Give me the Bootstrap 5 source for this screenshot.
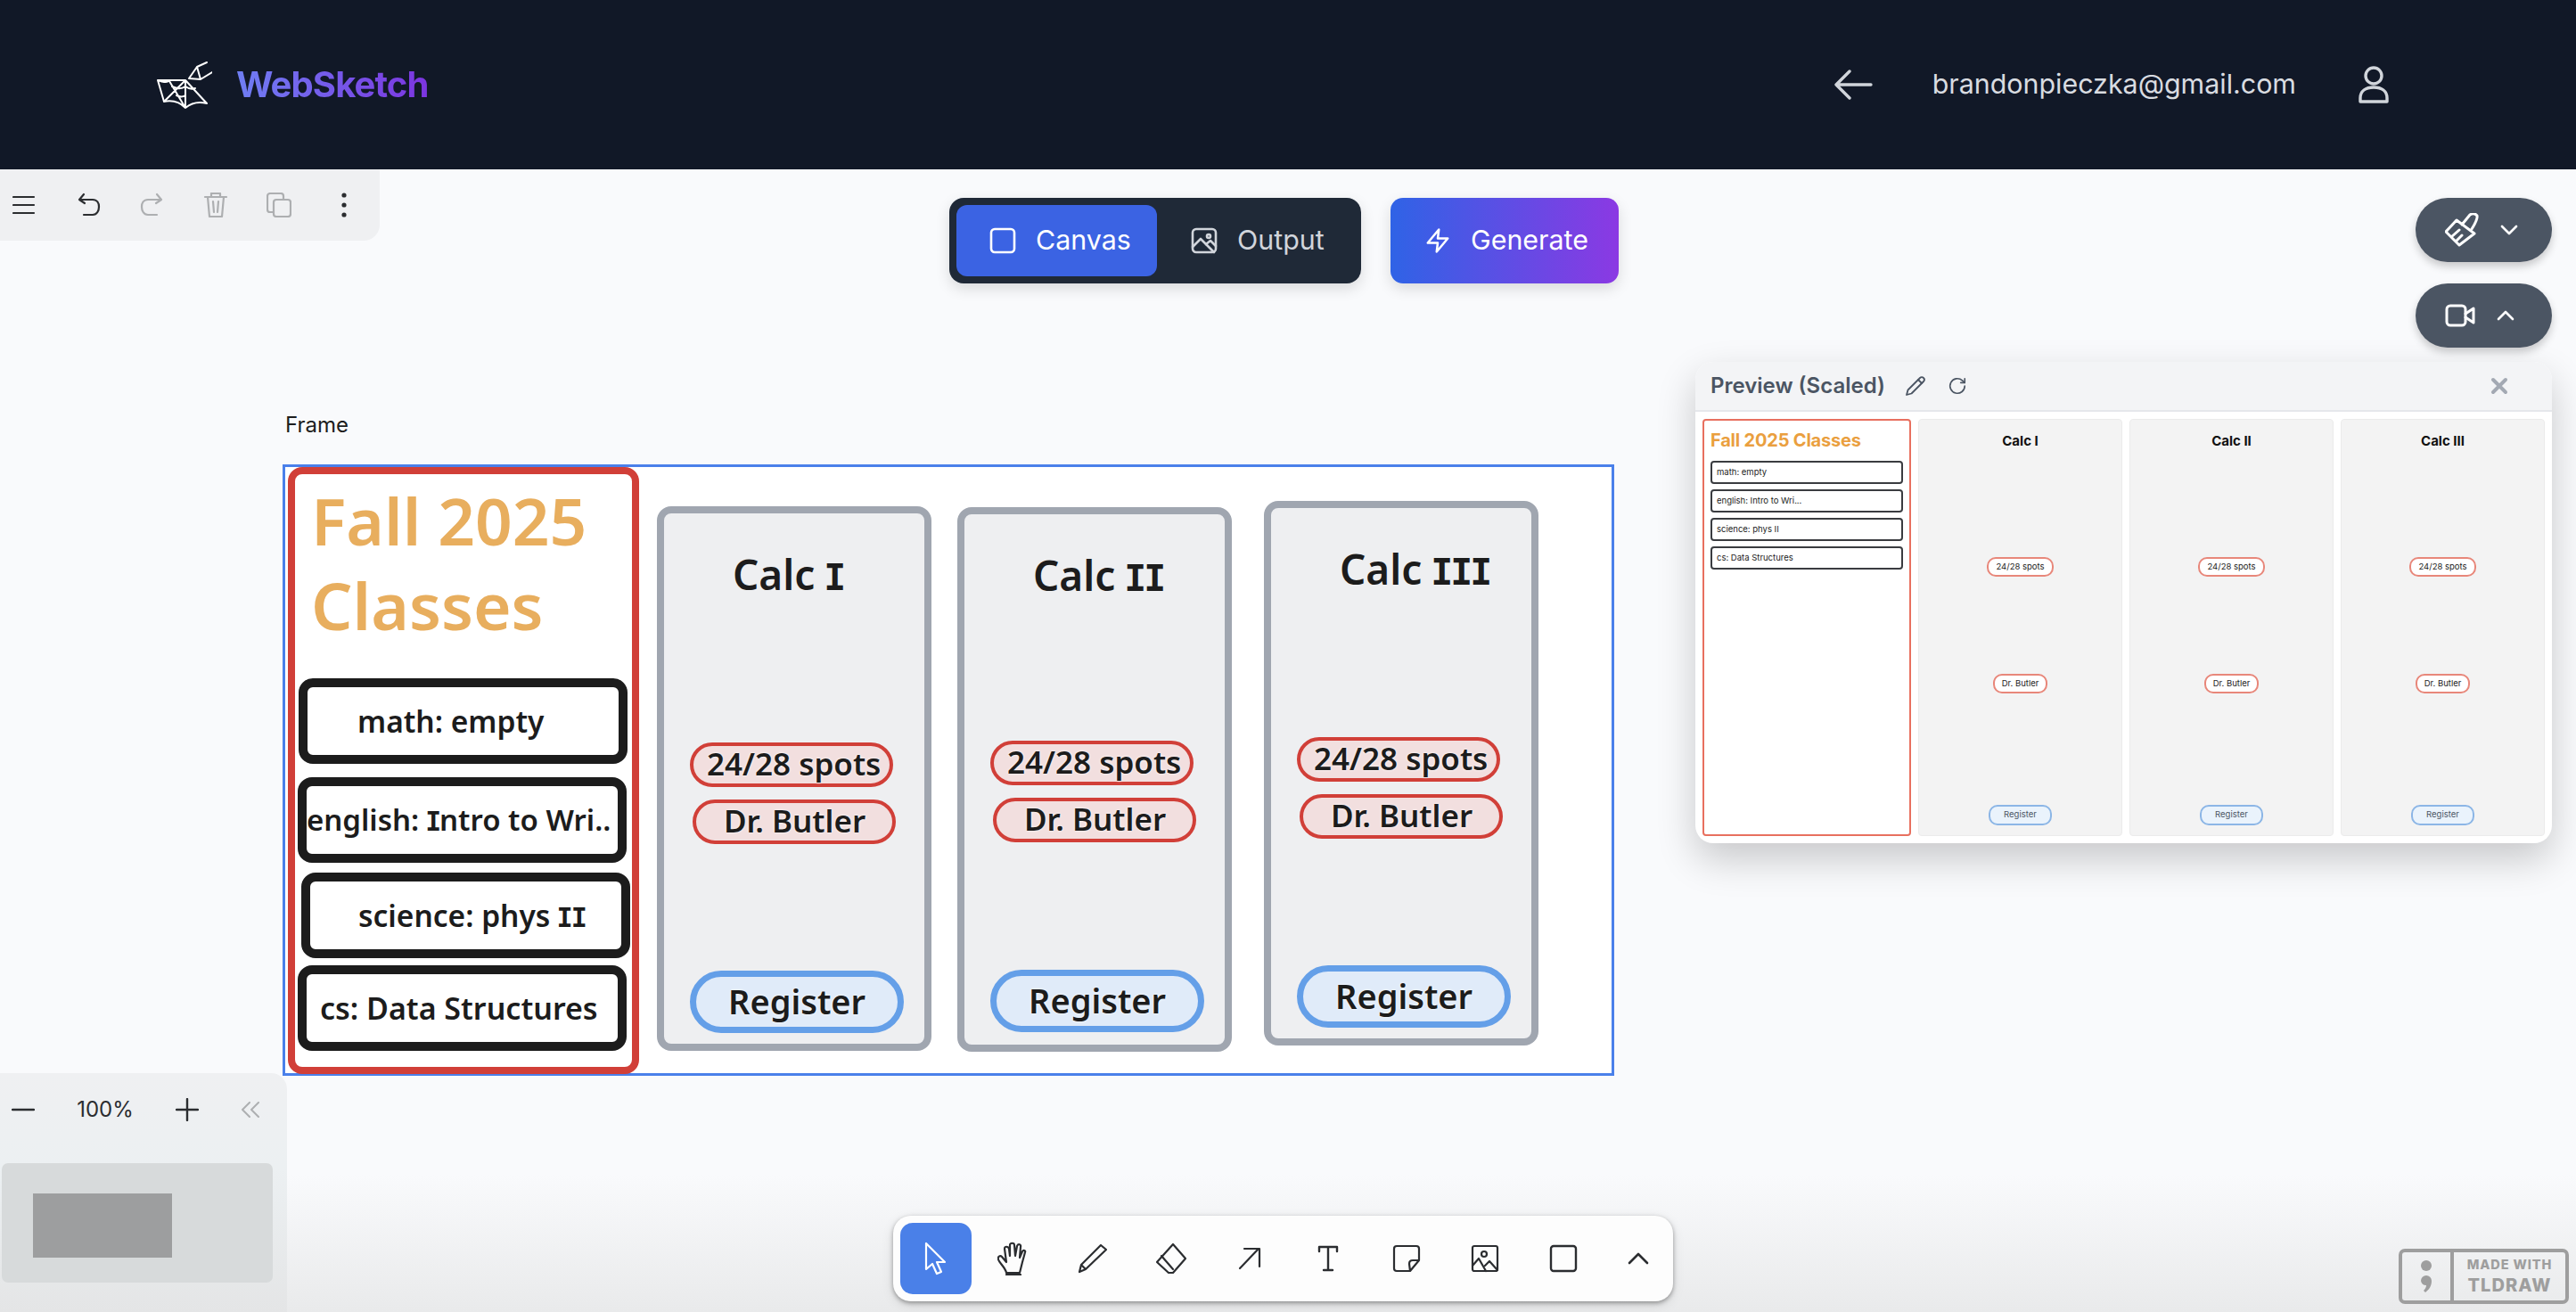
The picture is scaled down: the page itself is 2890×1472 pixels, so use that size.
<!DOCTYPE html>
<html lang="en">
<head>
<meta charset="UTF-8">
<meta name="viewport" content="width=device-width, initial-scale=1.0">
<title>WebSketch</title>
<link href="https://cdn.jsdelivr.net/npm/bootstrap@5.3.3/dist/css/bootstrap.min.css" rel="stylesheet">
<style>
  html, body { height: 100%; }
  body { font-family: Inter, "Liberation Sans", sans-serif; background: #f9fafc; overflow: hidden; }
  svg { display: block; flex: none; fill: none; stroke: currentColor; stroke-linecap: round; stroke-linejoin: round; }
  svg.solid { stroke: none; fill: currentColor; }

  .app-header { height: 190px; background: #111827; padding: 0 210px 0 176px; }
  .logo-mark { color: #fff; }
  .brand-text { font-size: 40px; font-weight: 700; letter-spacing: -.9px; margin-left: 27px; background: linear-gradient(to right, #6f7ef3, #7c35e0); -webkit-background-clip: text; background-clip: text; color: transparent; }
  .header-link { color: #d1d5db; }
  .user-mail { font-size: 30.400px; margin: 0 70px 0 67px; color: #d9dce1; }

  .work-area { position: relative; height: 1282px; background: linear-gradient(to bottom, #f9fafc 88%, #e9eaeb 100%); }

  /* tldraw panels */
  .top-panel { position: absolute; left: 0; top: 0; width: 426px; height: 80px; background: #eff0f2; border-bottom-right-radius: 18px; color: #2b2d30; }
  .top-panel svg { position: absolute; top: 26px; }
  .muted-icon { color: #adafb1; }
  .ic-menu { left: 14px; } .ic-undo { left: 87px; } .ic-redo { left: 157px; } .ic-trash { left: 228px; } .ic-dup { left: 299px; } .ic-dots { left: 376px; }

  .zoom-panel { position: absolute; left: 0; top: 1014px; width: 322px; height: 268px; background: linear-gradient(to bottom, #eff0f2, #ecf0f2 40%, #e4e5e6); border-top-right-radius: 18px; color: #2b2d30; }
  .zoom-row { height: 84px; padding: 0 30px 2px 13px; font-size: 24px; justify-content: space-between; }
  .mini-map { width: 304px; height: 134px; margin: 17px 0 0 2px; background: #d7dadb; border-radius: 7px; padding: 34px 0 0 35px; }
  .mini-view { width: 156px; height: 72px; background: #9d9e9f; }

  .tool-bar { position: absolute; left: 1002px; top: 1174px; width: 875px; height: 96px; padding: 8px 0 8px 8px; gap: 8px; background: #fdfdfd; border-radius: 20px; box-shadow: 0 2px 5px rgba(0,0,0,.35), 0 4px 14px rgba(0,0,0,.1); color: #2b2d30; }
  .tool-btn { flex: none; width: 80px; height: 80px; border-radius: 14px; }
  .tool-btn.active { background: #4a80e8; color: #fff; }
  .tool-btn.last-tool { width: 72px; }

  .made-with { position: absolute; left: 2691px; top: 1211px; width: 191px; height: 62px; border: 4px solid #9e9e9e; border-radius: 7px; color: #9e9e9e; font-weight: 800; line-height: 1; }
  .made-semi { width: 58px; height: 100%; border-right: 4px solid #9e9e9e; }
  .made-text { flex: 1; text-align: center; }
  .made-a { font-size: 14.5px; letter-spacing: .9px; }
  .made-b { font-size: 20px; letter-spacing: 1.1px; margin-top: 5px; }

  /* mode switch */
  .mode-switch { position: absolute; left: 1065px; top: 32px; width: 462px; height: 96px; padding: 8px; background: #1f2937; border-radius: 16px; box-shadow: 0 6px 16px rgba(0,0,0,.13); font-size: 30.400px; }
  .mode-btn { flex: none; height: 80px; width: 225px; gap: 22px; padding-left: 37px; border-radius: 12px; color: #d1d5db; }
  .mode-btn.active { background: #3b63e3; color: #fff; }
  .mode-btn + .mode-btn { padding-left: 38px; }
  .gen-btn { position: absolute; left: 1560px; top: 32px; width: 256px; height: 96px; gap: 22px; padding-left: 38px; border-radius: 14px; background: linear-gradient(to right, #2f63e6, #8b39e3); color: #fff; font-size: 30.400px; box-shadow: 0 6px 16px rgba(0,0,0,.13); }

  .fab-btn { position: absolute; left: 2710px; width: 153px; height: 72px; border-radius: 36px; background: #4b5563; color: #fff; gap: 24px; padding-left: 33px; box-shadow: 0 5px 10px rgba(0,0,0,.2); }
  .fab-a { top: 32px; } .fab-b { top: 128px; }

  /* preview panel */
  .preview-panel { position: absolute; left: 1902px; top: 216px; width: 961px; height: 540px; background: #fff; border-radius: 20px; box-shadow: 0 18px 44px rgba(0,0,0,.2); overflow: hidden; }
  .preview-head { height: 56px; padding: 0 49px 0 17px; background: #f3f4f6; border-bottom: 2px solid #e5e7eb; color: #4b5563; }
  .preview-title { font-size: 24px; font-weight: 600; margin-right: 22px; }
  .close-mark { color: #a3a9b3; }
  .preview-body { padding: 8px; gap: 8px; height: 476px; }
  .pv-side { width: 234px; height: 468px; border: 2px solid #e8705f; border-radius: 4px; background: #fff; padding: 10px 7px; }
  .pv-side-title { font-size: 20px; line-height: 24px; font-weight: 700; color: #ea9f3f; margin-bottom: 11px; letter-spacing: -.2px; }
  .pv-item { height: 26px; border: 2px solid #3a3c40; border-radius: 4px; padding-left: 5px; margin-bottom: 6px; font-size: 9.5px; line-height: 22px; color: #222; }
  .pv-col { width: 229px; height: 468px; background: #f3f3f3; border: 1px solid #ebebeb; border-radius: 4px; }
  .pv-col-title { font-size: 15px; font-weight: 700; line-height: 20px; margin-top: 14px; color: #111; }
  .pv-pill { height: 22px; padding: 0 8px; border: 2px solid #e8877a; border-radius: 10px; background: #fff; font-size: 9.5px; line-height: 18px; color: #222; }
  .pv-spots { margin-top: 120px; }
  .pv-doc { margin-top: 109px; }
  .pv-reg { height: 23px; margin-top: 125px; padding: 0 15px; background: #eaf3fc; border-color: #8cb6e6; color: #4b5563; }

  /* drawn frame on the canvas */
  .frame-label { position: absolute; left: 320px; top: 273px; font-size: 24px; line-height: 28px; color: #1d1d1d; }
  .frame-box { position: absolute; left: 317px; top: 331px; width: 1494px; height: 686px; background: #fff; border: 3px solid #4a80ea; font-family: "Noto Sans", sans-serif; color: #1c1c1c; font-weight: 600; }
  .slab { font-family: "DejaVu Sans Mono", monospace; font-size: .9em; font-weight: 700; letter-spacing: -.07em; margin-left: -.05em; }
  .sk-side { position: absolute; left: 3px; top: 0; width: 394px; height: 681px; border: 8px solid #d13f38; border-radius: 16px; background: #fff; padding: 4px; }
  .sk-head { height: 190px; margin: 0 0 35px 14px; font-size: 73px; line-height: 95px; color: #e8ae5e; font-weight: 600; }
  .sk-box { height: 96px; width: 369px; border: 10px solid #1c1c1c; border-radius: 16px; font-size: 33.5px; white-space: nowrap; overflow: hidden; }
  .sk-b1 { padding-left: 56px; }
  .sk-b2 { padding-left: 0; margin: 15px 0 0 -1px; font-size: 33px; }
  .sk-b3 { padding-left: 54px; margin: 11px 0 0 3px; }
  .sk-b4 { padding-left: 15px; margin: 8px 0 0 -1px; font-size: 34px; }
  .sk-card { position: absolute; width: 308px; height: 611px; border: 8px solid #a0a6b0; border-radius: 16px; background: #eeeff1; padding-left: 29px; }
  .sk-c1 { left: 417px; top: 44px; } .sk-c2 { left: 754px; top: 45px; } .sk-c3 { left: 1098px; top: 38px; }
  .sk-title { height: 60px; margin: 38px 0 0 48px; font-size: 46px; line-height: 60px; }
  .sk-pill { width: 228px; height: 50px; padding-bottom: 2px; border: 4px solid #d13f38; border-radius: 25px; background: #f2dfdf; font-size: 35px; white-space: nowrap; text-shadow: 0 0 3px #fff; }
  .sk-spots { margin-top: 159px; padding-left: 15px; }
  .sk-doc { margin: 14px 0 0 3px; padding-left: 31px; }
  .sk-reg { width: 240px; height: 70px; margin-top: 142px; padding: 0 0 2px 36px; border: 7px solid #649fe8; border-radius: 35px; background: #e0ebf9; font-size: 38px; white-space: nowrap; text-shadow: 0 0 3px #fff; }
  .sk-c2 .sk-spots { margin-top: 156px; }
  .sk-c2 .sk-reg { margin-top: 143px; }
</style>
</head>
<body>

<nav class="app-header d-flex align-items-center justify-content-between">
  <div class="d-flex align-items-center">
    <svg class="logo-mark" width="62" height="53" viewBox="0 0 62 53" stroke-width="2">
      <path d="M56 1 45 6 36 19l13 1 13-8M45 6l4 14"/>
      <path d="M1 21h31l24 26c-11-3-18 0-24 5-6-6-14-9-24-7zM1 21c6 2 9 3 12 1M32 21l0 31M32 21 8 45M14 22l18 30M17 28c6 3 11 3 15 0M22 38c4 2 7 2 10 0M32 28c4 3 8 3 11 2"/>
    </svg>
    <span class="brand-text">WebSketch</span>
  </div>
  <div class="d-flex align-items-center header-link">
    <svg width="43" height="34" viewBox="0 0 43 34" stroke-width="3.4"><path d="M2 17h39M17 2 2 17l15 15"/></svg>
    <span class="user-mail">brandonpieczka@gmail.com</span>
    <svg width="34" height="42" viewBox="0 0 34 42" stroke-width="3.4"><circle cx="17" cy="11" r="9"/><path d="M2 40v-4c0-8 6-12 15-12s15 4 15 12v4z"/></svg>
  </div>
</nav>

<main class="work-area">
  <div class="top-panel">
    <svg class="ic-menu" width="26" height="28" viewBox="0 0 26 28" stroke-width="2.2"><path d="M1 5h23M1 14h23M1 23h23"/></svg>
    <svg class="ic-undo" width="26" height="28" viewBox="0 0 26 28" stroke-width="2.2"><path d="M7 2 2 8l6 4M3 8h14c5 0 7 4 7 8s-2 9-7 9H7"/></svg>
    <svg class="ic-redo muted-icon" width="26" height="28" viewBox="0 0 26 28" stroke-width="2.2"><path d="M19 2l5 6-6 4M23 8H9c-5 0-7 4-7 8s2 9 7 9h10"/></svg>
    <svg class="ic-trash muted-icon" width="28" height="28" viewBox="0 0 28 28" stroke-width="2.2"><path d="M2 5h24M9 5V1h10v4M5 5l2 22h14l2-22M11 10l1 12M17 10l-1 12"/></svg>
    <svg class="ic-dup muted-icon" width="28" height="28" viewBox="0 0 28 28" stroke-width="2.2"><rect x="8" y="8" width="19" height="19" rx="3"/><path d="M8 22H4a3 3 0 0 1-3-3V4a3 3 0 0 1 3-3h12a3 3 0 0 1 3 3v4"/></svg>
    <svg class="ic-dots solid" width="20" height="28" viewBox="0 0 20 28"><circle cx="10" cy="3" r="2.6"/><circle cx="10" cy="14" r="2.6"/><circle cx="10" cy="25" r="2.6"/></svg>
  </div>

  <div class="mode-switch d-flex">
    <div class="mode-btn active d-flex align-items-center">
      <svg width="30" height="30" viewBox="0 0 30 30" stroke-width="2.6"><rect x="2" y="2" width="26" height="26" rx="4"/></svg>
      <span>Canvas</span>
    </div>
    <div class="mode-btn d-flex align-items-center">
      <svg width="30" height="30" viewBox="0 0 30 30" stroke-width="2.6"><rect x="2" y="2" width="26" height="26" rx="4"/><circle cx="20" cy="10" r="2"/><path d="M2 22 11 13l15 15"/><path d="M17 19l5-4 6 6"/></svg>
      <span>Output</span>
    </div>
  </div>
  <div class="gen-btn d-flex align-items-center">
    <svg width="30" height="32" viewBox="0 0 24 24" stroke-width="2"><path d="M13 2 3 14h9l-1 8 10-12h-9l1-8z"/></svg>
    <span>Generate</span>
  </div>

  <div class="fab-btn fab-a d-flex align-items-center">
    <svg width="38" height="38" viewBox="0 0 38 38" stroke-width="3"><path d="M19 13 28 2q5-3 8 1 1 4-6 15M13 8l20 15-17 13L1 21zM7 27l9-8M12 32l7-7"/></svg>
    <svg width="20" height="12" viewBox="0 0 20 12" stroke-width="2.6"><path d="M2 2l8 8 8-8"/></svg>
  </div>
  <div class="fab-btn fab-b d-flex align-items-center">
    <svg width="34" height="26" viewBox="0 0 34 26" stroke-width="3"><rect x="2" y="2" width="21" height="22" rx="4"/><path d="M23 11l9-6v16l-9-6"/></svg>
    <svg width="20" height="12" viewBox="0 0 20 12" stroke-width="2.6"><path d="M2 10l8-8 8 8"/></svg>
  </div>

  <section class="preview-panel">
    <div class="preview-head d-flex align-items-center">
      <span class="preview-title">Preview (Scaled)</span>
      <svg width="24" height="24" viewBox="0 0 24 24" stroke-width="1.8"><path d="M17 3a2.8 2.8 0 0 1 4 4L7.5 20.5 2 22l1.5-5.500z"/><path d="M15 5l4 4"/></svg>
      <svg class="ms-4" width="22" height="24" viewBox="0 0 24 24" stroke-width="1.8"><path d="M21 12a9 9 0 1 1-3-6.700L21 8"/><path d="M21 3v5h-5"/></svg>
      <svg class="close-mark ms-auto" width="20" height="20" viewBox="0 0 20 20" stroke-width="4"><path d="M3 3l14 14M17 3 3 17"/></svg>
    </div>
    <div class="preview-body d-flex">
      <div class="pv-side">
        <div class="pv-side-title">Fall 2025 Classes</div>
        <div class="pv-item">math: empty</div>
        <div class="pv-item">english: Intro to Wri...</div>
        <div class="pv-item">science: phys II</div>
        <div class="pv-item">cs: Data Structures</div>
      </div>
      <div class="pv-col d-flex flex-column align-items-center">
        <div class="pv-col-title">Calc I</div>
        <div class="pv-pill pv-spots">24/28 spots</div>
        <div class="pv-pill pv-doc">Dr. Butler</div>
        <div class="pv-pill pv-reg">Register</div>
      </div>
      <div class="pv-col d-flex flex-column align-items-center">
        <div class="pv-col-title">Calc II</div>
        <div class="pv-pill pv-spots">24/28 spots</div>
        <div class="pv-pill pv-doc">Dr. Butler</div>
        <div class="pv-pill pv-reg">Register</div>
      </div>
      <div class="pv-col d-flex flex-column align-items-center">
        <div class="pv-col-title">Calc III</div>
        <div class="pv-pill pv-spots">24/28 spots</div>
        <div class="pv-pill pv-doc">Dr. Butler</div>
        <div class="pv-pill pv-reg">Register</div>
      </div>
    </div>
  </section>

  <div class="frame-label">Frame</div>
  <div class="frame-box">
    <div class="sk-side">
      <div class="sk-head">Fall 2025<br>Classes</div>
      <div class="sk-box sk-b1 d-flex align-items-center">math: empty</div>
      <div class="sk-box sk-b2 d-flex align-items-center"><span>english: <span class="slab">I</span>ntro to Wri..</span></div>
      <div class="sk-box sk-b3 d-flex align-items-center"><span>science: phys <span class="slab">II</span></span></div>
      <div class="sk-box sk-b4 d-flex align-items-center">cs: Data Structures</div>
    </div>

    <div class="sk-card sk-c1">
      <div class="sk-title">Calc <span class="slab">I</span></div>
      <div class="sk-pill sk-spots d-flex align-items-center">24/28 spots</div>
      <div class="sk-pill sk-doc d-flex align-items-center">Dr. Butler</div>
      <div class="sk-reg d-flex align-items-center">Register</div>
    </div>
    <div class="sk-card sk-c2">
      <div class="sk-title">Calc <span class="slab">II</span></div>
      <div class="sk-pill sk-spots d-flex align-items-center">24/28 spots</div>
      <div class="sk-pill sk-doc d-flex align-items-center">Dr. Butler</div>
      <div class="sk-reg d-flex align-items-center">Register</div>
    </div>
    <div class="sk-card sk-c3">
      <div class="sk-title">Calc <span class="slab">III</span></div>
      <div class="sk-pill sk-spots d-flex align-items-center">24/28 spots</div>
      <div class="sk-pill sk-doc d-flex align-items-center">Dr. Butler</div>
      <div class="sk-reg d-flex align-items-center">Register</div>
    </div>
  </div>

  <div class="zoom-panel">
    <div class="zoom-row d-flex align-items-center">
      <svg width="26" height="4" viewBox="0 0 26 4" stroke-width="2.4"><path d="M1 2h24"/></svg>
      <span>100%</span>
      <svg width="26" height="26" viewBox="0 0 26 26" stroke-width="2.4"><path d="M1 13h24M13 1v24"/></svg>
      <svg class="muted-icon" width="22" height="18" viewBox="0 0 22 18" stroke-width="2"><path d="M10 1 2 9l8 8M20 1l-8 8 8 8"/></svg>
    </div>
    <div class="mini-map"><div class="mini-view"></div></div>
  </div>

  <div class="tool-bar d-flex align-items-center">
    <div class="tool-btn active d-flex align-items-center justify-content-center">
      <svg width="28" height="38" viewBox="0 0 28 38" stroke-width="2.200"><path d="M3 2v29l7-6 5 11 5-2-5-11h9z"/></svg>
    </div>
    <div class="tool-btn d-flex align-items-center justify-content-center">
      <svg width="38" height="38" viewBox="0 0 38 38" stroke-width="2.200"><path d="M10 35c-1-6-8-11-9-15-1-3 2-5 4-3l5 6-2-15c0-3 4-3 5 0l1 8V4c0-3 5-3 5 0l1 12 2-11c1-3 5-2 4 1l-1 12 3-7c1-2 4-1 3 1l-3 11c-1 4-2 8-3 12zM10 37h16"/></svg>
    </div>
    <div class="tool-btn d-flex align-items-center justify-content-center">
      <svg width="34" height="34" viewBox="0 0 34 34" stroke-width="2.200"><path d="M26 2l6 5L9 29l-7 3 2-8zM4 24l5 5"/></svg>
    </div>
    <div class="tool-btn d-flex align-items-center justify-content-center">
      <svg width="36" height="36" viewBox="0 0 36 36" stroke-width="2.200"><path d="M20 2l14 16-14 16h-5L2 22zM7 15l13 15"/></svg>
    </div>
    <div class="tool-btn d-flex align-items-center justify-content-center">
      <svg width="26" height="26" viewBox="0 0 26 26" stroke-width="2.200"><path d="M2 24 22 3M7 2h17v20"/></svg>
    </div>
    <div class="tool-btn d-flex align-items-center justify-content-center">
      <svg width="24" height="30" viewBox="0 0 24 30" stroke-width="2.400"><path d="M2 7V2h20v5M12 2v26M7 28h10"/></svg>
    </div>
    <div class="tool-btn d-flex align-items-center justify-content-center">
      <svg width="32" height="32" viewBox="0 0 32 32" stroke-width="2.200"><path d="M20 30H5a3 3 0 0 1-3-3V5a3 3 0 0 1 3-3h22a3 3 0 0 1 3 3v13zM20 30l-1-8c0-3 2-4 4-4h7"/></svg>
    </div>
    <div class="tool-btn d-flex align-items-center justify-content-center">
      <svg width="32" height="32" viewBox="0 0 32 32" stroke-width="2.200"><rect x="2" y="2" width="28" height="28" rx="2"/><circle cx="15" cy="11" r="3"/><path d="M2 24l7-8 8 14M16 24l5-5 9 10"/></svg>
    </div>
    <div class="tool-btn d-flex align-items-center justify-content-center">
      <svg width="32" height="32" viewBox="0 0 32 32" stroke-width="2.400"><rect x="2" y="2" width="28" height="28" rx="3"/></svg>
    </div>
    <div class="tool-btn last-tool d-flex align-items-center justify-content-center">
      <svg width="24" height="14" viewBox="0 0 24 14" stroke-width="2.600"><path d="M2 12 12 2l10 10"/></svg>
    </div>
  </div>

  <div class="made-with d-flex">
    <div class="made-semi d-flex align-items-center justify-content-center">
      <svg class="solid" width="16" height="38" viewBox="0 0 16 38"><circle cx="8" cy="7" r="6"/><path d="M2 24a6 6 0 0 1 12 0c0 6-3 10-7 13l-2-2c2-2 3-4 3-6a6 6 0 0 1-6-5z"/></svg>
    </div>
    <div class="made-text d-flex flex-column justify-content-center">
      <div class="made-a">MADE WITH</div>
      <div class="made-b">TLDRAW</div>
    </div>
  </div>
</main>

<script src="https://cdn.jsdelivr.net/npm/bootstrap@5.3.3/dist/js/bootstrap.bundle.min.js"></script>
</body>
</html>
